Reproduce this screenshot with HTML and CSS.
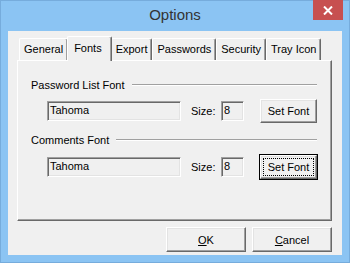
FILE: index.html
```html
<!DOCTYPE html>
<html lang="en">
<head>
  <meta charset="UTF-8" />
  <title>Options</title>
  <link rel="stylesheet" href="styles.css">
</head>
<body>
  <div class="window">
    <div class="titlebar">
      <span></span>
      <span class="title">Options</span>
      <div class="close">
        <svg width="10" height="9" viewBox="0 0 10 9">
          <path d="M1 0.5 L9 8.5 M9 0.5 L1 8.5" stroke="#fff" stroke-width="2" fill="none" />
        </svg>
      </div>
    </div>

    <div class="client">
      <div class="tabs">
        <div class="tab">General</div>
        <div class="tab selected">Fonts</div>
        <div class="tab">Export</div>
        <div class="tab">Passwords</div>
        <div class="tab">Security</div>
        <div class="tab">Tray Icon</div>
      </div>

      <div class="panel">
        <div class="group-label"><span>Password List Font</span><div class="rule"></div></div>
        <div class="row first">
          <div class="field name">Tahoma</div>
          <span class="size-label">Size:</span>
          <div class="field size">8</div>
          <button class="btn set-font">Set Font</button>
        </div>

        <div class="group-label second"><span>Comments Font</span><div class="rule"></div></div>
        <div class="row">
          <div class="field name">Tahoma</div>
          <span class="size-label">Size:</span>
          <div class="field size">8</div>
          <button class="btn set-font focused"><span class="focus-rect">Set Font</span></button>
        </div>
      </div>

      <div class="actions">
        <button class="btn dialog"><u>O</u>K</button>
        <button class="btn dialog"><u>C</u>ancel</button>
      </div>
    </div>
  </div>
</body>
</html>
```

FILE: styles.css
```css
* {
  box-sizing: border-box;
}

body {
  margin: 0;
  font-family: "Liberation Sans", Arial, sans-serif;
  font-size: 11px;
  color: #000;
}

.window {
  width: 350px;
  height: 263px;
  background: #8bc4f3;
  padding: 0 8px 8px 8px;
  box-shadow: inset 0 0 0 1px #76acdc;
}

.titlebar {
  height: 31px;
  display: grid;
  grid-template-columns: 1fr auto 1fr;
}
.title {
  font-size: 15px;
  color: #333;
  line-height: 30px;
}
.close {
  justify-self: end;
  margin-right: -1px;
  width: 30px;
  height: 20px;
  background: #c75050;
  display: flex;
  align-items: center;
  justify-content: center;
}

.client {
  height: 224px;
  background: #f0f0f0;
  padding: 5px 10px 0 9px;
}

/* tab strip */
.tabs {
  height: 24px;
  display: flex;
  align-items: flex-end;
  padding-left: 2px;
}
.tab {
  height: 22px;
  padding: 0 4px;
  line-height: 21px;
  border-top: 1px solid #fff;
  border-left: 1px solid #fff;
  border-right: 1px solid #696969;
  box-shadow: inset -1px 0 0 #a0a0a0;
  border-radius: 2px 2px 0 0;
  background: #f0f0f0;
}
.tab.selected {
  height: 25px;
  margin: 0 -1px -1px -1px;
  padding: 0 9px 0 6px;
  line-height: 22px;
  position: relative;
  z-index: 1;
}

/* tab page */
.panel {
  height: 161px;
  border-top: 1px solid #fff;
  border-left: 1px solid #fff;
  border-right: 1px solid #696969;
  border-bottom: 1px solid #696969;
  box-shadow: inset -1px -1px 0 #a0a0a0;
  padding: 17px 14px 0 13px;
}

.group-label {
  height: 14px;
  display: flex;
  align-items: center;
  gap: 7px;
  white-space: nowrap;
}
.group-label.second {
  margin-top: 10px;
}
.rule {
  flex: 1;
  height: 2px;
  border-top: 1px solid #a0a0a0;
  border-bottom: 1px solid #fff;
}

.row {
  display: flex;
  align-items: center;
  height: 24px;
  margin-top: 8px;
  padding-left: 16px;
}
.row.first {
  margin-top: 7px;
}

.field {
  height: 20px;
  line-height: 17px;
  padding-left: 2px;
  background: #f0f0f0;
  border-top: 1px solid #a0a0a0;
  border-left: 1px solid #a0a0a0;
  border-right: 1px solid #fff;
  border-bottom: 1px solid #fff;
  box-shadow: inset 1px 1px 0 #696969, inset -1px -1px 0 #e3e3e3;
}
.field.name {
  width: 134px;
}
.field.size {
  width: 23px;
}
.size-label {
  width: 30px;
  margin-left: 10px;
}

.btn {
  font-family: inherit;
  font-size: 11px;
  color: #000;
  background: #f0f0f0;
  padding: 0;
  border-top: 1px solid #fff;
  border-left: 1px solid #fff;
  border-right: 1px solid #696969;
  border-bottom: 1px solid #696969;
  box-shadow: inset -1px -1px 0 #a0a0a0, inset 1px 1px 0 #e3e3e3;
  border-radius: 0;
}
.set-font {
  width: 57px;
  height: 24px;
  margin-left: 16px;
}
.set-font.focused {
  outline: 1px solid #000;
  outline-offset: 0;
  padding: 2px;
}
.focus-rect {
  display: block;
  height: 100%;
  line-height: 16px;
  border: 1px dotted #000;
}

.actions {
  display: flex;
  justify-content: flex-end;
  gap: 6px;
  margin-top: 6px;
}
.btn.dialog {
  width: 80px;
  height: 25px;
}
```
